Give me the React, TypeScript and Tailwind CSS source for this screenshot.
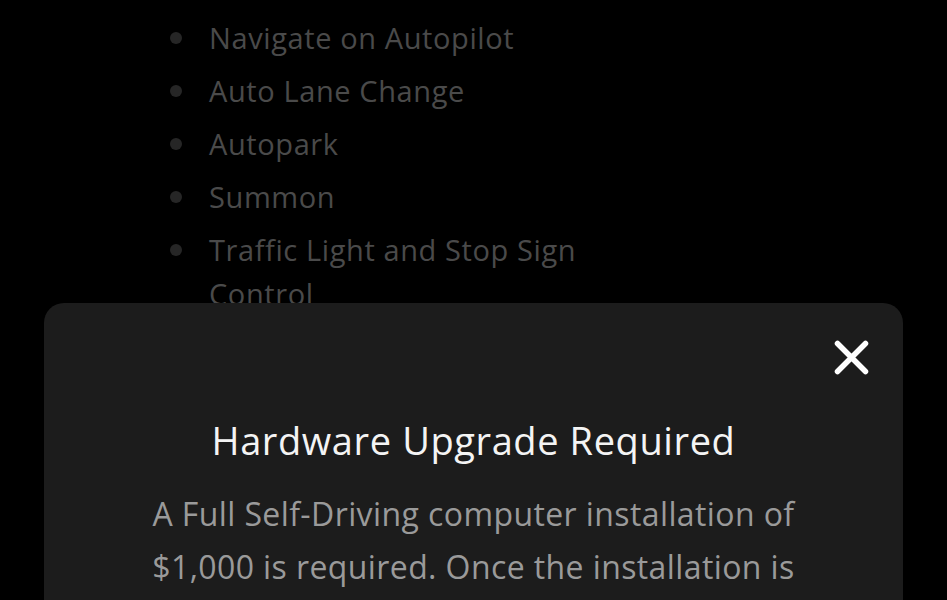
const features = [
  "Navigate on Autopilot",
  "Auto Lane Change",
  "Autopark",
  "Summon",
  "Traffic Light and Stop Sign Control",
];

export default function App() {
  return (
    <div className="relative h-[600px] w-full overflow-hidden bg-black font-['Open_Sans',sans-serif]">
      <div className="pl-[170px] pt-[16px]">
        <ul className="flex w-[440px] flex-col gap-[9px]">
          {features.map((f) => (
            <li key={f} className="flex items-start">
              <span className="mt-[16px] h-[12px] w-[12px] shrink-0 rounded-full bg-[#262626]" />
              <span className="ml-[27px] text-[29px] leading-[44px] tracking-[0.6px] text-[#4a4a4a]">
                {f}
              </span>
            </li>
          ))}
        </ul>
      </div>

      <div className="absolute left-[44px] top-[303px] h-[400px] w-[859px] rounded-[20px] bg-[#1c1c1c]">
        <div className="flex justify-end pr-[34px] pt-[37px]">
          <svg width="35" height="35" viewBox="0 0 35 35" className="text-white">
            <path
              d="M3.5 3.5 L31.5 31.5 M31.5 3.5 L3.5 31.5"
              stroke="currentColor"
              strokeWidth="5.5"
              strokeLinecap="round"
            />
          </svg>
        </div>
        <div className="flex flex-col items-center pt-[43px] text-center">
          <h2 className="text-[38px] leading-[44px] tracking-[0.6px] text-[#f4f4f4]">
            Hardware Upgrade Required
          </h2>
          <p className="mt-[25px] text-[32px] leading-[53px] tracking-[0.4px] text-[#9a9a9a]">
            A Full Self-Driving computer installation of
            <br />
            $1,000 is required. Once the installation is
          </p>
        </div>
      </div>
    </div>
  );
}
